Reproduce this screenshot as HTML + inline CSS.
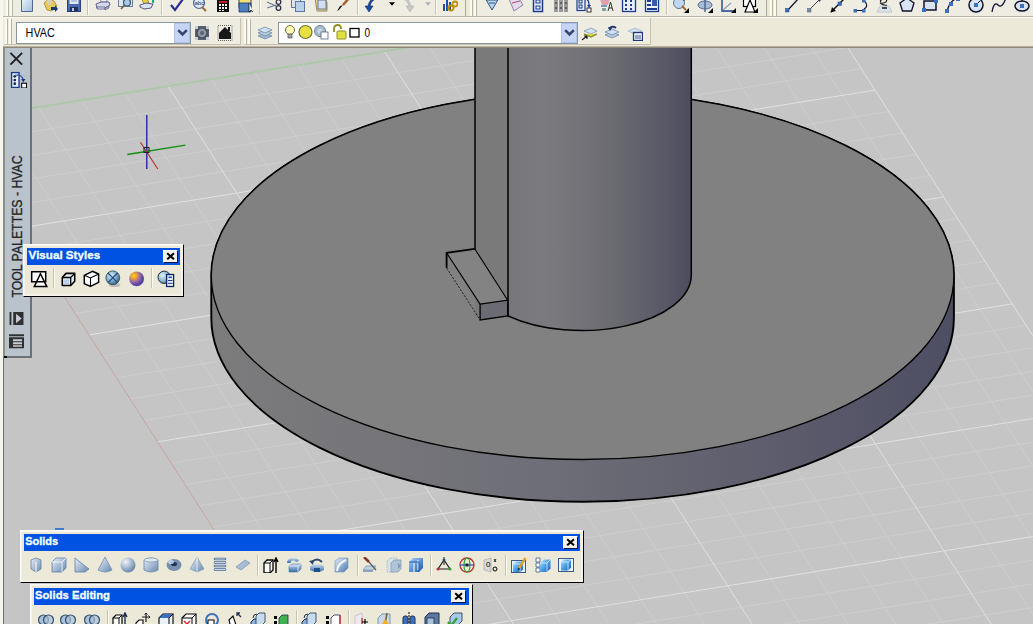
<!DOCTYPE html><html><head><meta charset="utf-8"><style>
*{margin:0;padding:0;box-sizing:border-box}
html,body{width:1033px;height:624px;overflow:hidden;background:#ece9d8;font-family:"Liberation Sans",sans-serif}
.abs{position:absolute}
</style></head><body>
<svg class="abs" style="left:0;top:0" width="1033" height="624" viewBox="0 0 1033 624"><defs><clipPath id="dclip"><rect x="4" y="48" width="1029" height="576"/></clipPath></defs><g clip-path="url(#dclip)"><rect x="0" y="0" width="1033" height="624" fill="#c5c5c5"/><path d="M-34.7 142.5L820.1 4.6M-20.9 163.9L833.8 26.0M-7.2 185.2L847.6 47.4M6.5 206.6L861.3 68.8M34.0 249.4L888.8 111.5M47.7 270.8L902.5 132.9M61.4 292.1L916.2 154.3M75.2 313.5L930.0 175.7M102.6 356.3L957.4 218.4M116.4 377.7L971.1 239.8M130.1 399.0L984.9 261.2M143.8 420.4L998.6 282.6M171.3 463.2L1026.1 325.3M185.0 484.6L1039.8 346.7M198.7 505.9L1053.5 368.1M212.5 527.3L1067.2 389.5M239.9 570.1L1094.7 432.2M253.7 591.5L1108.4 453.6M267.4 612.8L1122.2 475.0M281.1 634.2L1135.9 496.4M308.6 677.0L1163.4 539.1M322.3 698.4L1177.1 560.5M336.0 719.7L1190.8 581.9M349.8 741.1L1204.5 603.3M377.2 783.9L1232.0 646.0M391.0 805.3L1245.7 667.4M404.7 826.6L1259.5 688.8M418.4 848.0L1273.2 710.2M445.9 890.8L1300.7 752.9M459.6 912.2L1314.4 774.3M473.3 933.5L1328.1 795.7M487.1 954.9L1341.8 817.1M514.5 997.7L1369.3 859.8M528.3 1019.1L1383.0 881.2M542.0 1040.4L1396.8 902.6M555.7 1061.8L1410.5 924.0M-5.1 114.1L612.7 1076.2M38.2 107.1L656.0 1069.2M81.4 100.2L699.3 1062.3M124.7 93.2L742.6 1055.3M211.3 79.2L829.1 1041.3M254.6 72.2L872.4 1034.3M297.8 65.3L915.7 1027.4M341.1 58.3L959.0 1020.4M427.7 44.3L1045.5 1006.4M471.0 37.3L1088.8 999.4M514.2 30.4L1132.1 992.5M557.5 23.4L1175.4 985.5M644.1 9.4L1261.9 971.5M687.4 2.4L1305.2 964.5M730.6 -4.5L1348.5 957.6M773.9 -11.5L1391.8 950.6" stroke="#cecece" stroke-width="1" fill="none"/><path d="M20.3 228.0L875.0 90.1M88.9 334.9L943.7 197.0M157.6 441.8L1012.3 303.9M226.2 548.7L1081.0 410.8M294.9 655.6L1149.6 517.7M363.5 762.5L1218.3 624.6M432.2 869.4L1286.9 731.5M500.8 976.3L1355.6 838.4M168.0 86.2L785.9 1048.3M384.4 51.3L1002.2 1013.4M600.8 16.4L1218.7 978.5M806.4 -16.8L1424.2 945.3" stroke="#e0e0e0" stroke-width="1" fill="none"/><path d="M-48.4 121.1L806.4 -16.8" stroke="#aec9aa" stroke-width="2" fill="none"/><path d="M-48.4 121.1L569.5 1083.2" stroke="#c8a4a4" stroke-width="1" fill="none"/><defs>
<linearGradient id="dside" x1="0" x2="1" y1="0" y2="0">
<stop offset="0" stop-color="#7c7c7d"/><stop offset="0.45" stop-color="#6e6e77"/><stop offset="0.8" stop-color="#5a5a6b"/><stop offset="1" stop-color="#4e4e63"/></linearGradient>
<linearGradient id="cyl" gradientUnits="userSpaceOnUse" x1="508" x2="691" y1="0" y2="0">
<stop offset="0" stop-color="#77777b"/><stop offset="0.18" stop-color="#7b7b7f"/><stop offset="0.4" stop-color="#737379"/><stop offset="0.62" stop-color="#68686f"/><stop offset="0.83" stop-color="#5a5a68"/><stop offset="1" stop-color="#4c4c5e"/></linearGradient>
</defs><path d="M211.3 275.5A371.3 184 0 0 1 953.9000000000001 275.5L953.9000000000001 317.8A371.3 184 0 0 1 211.3 317.8Z" fill="url(#dside)" stroke="#000" stroke-width="1.9"/><ellipse cx="582.6" cy="275.5" rx="371.3" ry="184" fill="#818181" stroke="#000" stroke-width="1.3"/><path d="M475 40L691.3 40L691.3 275A109.3 55.5 0 0 1 508 315.9L508 317L475 317Z" fill="url(#cyl)"/><rect x="475" y="40" width="33" height="277" fill="#7a7a7a"/><path d="M691.3 40L691.3 275A109.3 55.5 0 0 1 508 315.9" fill="none" stroke="#000" stroke-width="1.5"/><path d="M475 40L475 249M508 40L508 317" fill="none" stroke="#000" stroke-width="1.5"/><path d="M446.6 252.9L474.8 248.9L507.7 300.2L480.1 304.1Z" fill="#838383"/><path d="M480.1 304.1L507.7 300.2L507.7 315.9L480.1 319.9Z" fill="#6b6b73" stroke="#000" stroke-width="1.3"/><path d="M446.6 252.9L480.1 304.1M474.8 248.9L507.7 300.2" stroke="#000" stroke-width="1.1" fill="none"/><path d="M474.8 248.9L446.6 252.9L446.6 268" stroke="#000" stroke-width="1.8" fill="none"/><path d="M446.6 268L480.1 319.9" stroke="#1a1a1a" stroke-width="0.9" stroke-dasharray="2.2 1.4"/><path d="M146.8 115L146.8 169" stroke="#1a1aa0" stroke-width="1.3"/><path d="M127.3 154.5L185.4 145.2" stroke="#109010" stroke-width="1.3"/><path d="M140.4 142.3L157.8 169" stroke="#b03020" stroke-width="1.1"/><rect x="144" y="147.5" width="5" height="5" fill="none" stroke="#202020" stroke-width="1"/></g></svg>
<div class="abs" style="left:0;top:48px;width:4px;height:576px;background:#f6f5ee"></div>
<div class="abs" style="left:3px;top:48px;width:1px;height:576px;background:#6e6e6a"></div>
<div class="abs" style="left:0px;top:0px;width:1033px;height:48px;background:#ece9d8"></div>
<div class="abs" style="left:0px;top:16px;width:1033px;height:1px;background:#b9b5a4"></div>
<div class="abs" style="left:0px;top:17px;width:1033px;height:1px;background:#faf9f2"></div>
<div class="abs" style="left:0px;top:45px;width:1033px;height:1px;background:#ebe8d8"></div>
<div class="abs" style="left:0px;top:46px;width:1033px;height:1px;background:#bab2a2"></div>
<div class="abs" style="left:0px;top:47px;width:1033px;height:1px;background:#8e8678"></div>
<div class="abs" style="left:0px;top:0px;width:466px;height:16px;background:#efede2;border-right:1px solid #aaa694"></div>
<div class="abs" style="left:0px;top:0px;width:3px;height:48px;background:#f7f6ef"></div>
<div class="abs" style="left:6px;top:0px;width:3px;height:16px;background:#fbfaf3;border-right:1px solid #b8b4a2"></div>
<div class="abs" style="left:10px;top:0px;width:3px;height:16px;background:#fbfaf3;border-right:1px solid #b8b4a2"></div>
<div class="abs" style="left:470px;top:0px;width:3px;height:16px;background:#fbfaf3;border-right:1px solid #b8b4a2"></div>
<div class="abs" style="left:474px;top:0px;width:3px;height:16px;background:#fbfaf3;border-right:1px solid #b8b4a2"></div>
<div class="abs" style="left:478px;top:0px;width:289px;height:16px;background:#efede2;border-right:1px solid #aaa694"></div>
<div class="abs" style="left:770px;top:0px;width:3px;height:16px;background:#fbfaf3;border-right:1px solid #b8b4a2"></div>
<div class="abs" style="left:774px;top:0px;width:3px;height:16px;background:#fbfaf3;border-right:1px solid #b8b4a2"></div>
<div class="abs" style="left:778px;top:0px;width:255px;height:16px;background:#efede2"></div>
<svg class="abs" style="left:19px;top:-3px" width="16" height="16" viewBox="0 0 16 16"><defs><linearGradient id="gnd" x1="0" y1="0" x2="1" y2="1"><stop offset="0" stop-color="#f4f8fc"/><stop offset="1" stop-color="#9ebcdc"/></linearGradient></defs><path d="M2.5 0.5H11L13.5 3V14.5H2.5Z" fill="url(#gnd)" stroke="#4a6898"/></svg>
<svg class="abs" style="left:43px;top:-3px" width="16" height="16" viewBox="0 0 16 16"><path d="M1 6L5 2L11 4L14 9L9 14L4 13Z" fill="#e8c850" stroke="#a08830" stroke-width="0.8"/><path d="M3 4L7 1L10 5L6 9Z" fill="#d8d0b0"/><path d="M8 10L12 10L12 8L15 12L12 15L12 13L8 13Z" fill="#1a3a80"/></svg>
<svg class="abs" style="left:66px;top:-3px" width="16" height="16" viewBox="0 0 16 16"><rect x="1.5" y="0" width="13" height="14.5" fill="#4868b0" stroke="#2a4080"/><rect x="3.5" y="0" width="9" height="7" fill="#e0e8f4"/><path d="M5 2H11M5 4H11" stroke="#8aa0c8"/><rect x="4" y="10" width="8" height="4.5" fill="#20305a"/><rect x="6" y="11" width="2" height="3" fill="#c0c8e0"/></svg>
<svg class="abs" style="left:95px;top:-3px" width="16" height="16" viewBox="0 0 16 16"><path d="M5 0H11L12 5H6Z" fill="#f4f4fa" stroke="#8080a8" stroke-width="0.9"/><path d="M1 7L6 5H14L15 8L10 11H2Z" fill="#d8d8ec" stroke="#505080" stroke-width="0.9"/><path d="M2 10H10V12H2Z" fill="#e8e8f4" stroke="#505080" stroke-width="0.8"/><path d="M10 11L14 9V11L10 13Z" fill="#b0b0d0" stroke="#505080" stroke-width="0.6"/></svg>
<svg class="abs" style="left:117px;top:-3px" width="16" height="16" viewBox="0 0 16 16"><rect x="1.5" y="-2" width="14" height="11.5" fill="#dce8f0" stroke="#6a8098"/><circle cx="10" cy="5.5" r="3.5" fill="#a8c8e0" stroke="#3a5a78" stroke-width="1.2"/><path d="M7.5 8L4 12" stroke="#7a5a40" stroke-width="1.6"/></svg>
<svg class="abs" style="left:139px;top:-3px" width="16" height="16" viewBox="0 0 16 16"><path d="M2 0L7 -1L10 6L5 7Z" fill="#e8d040" stroke="#908020" stroke-width="0.8"/><path d="M1 8L7 6L14 7L12 11L5 12L1 10Z" fill="#dce4f4" stroke="#404880" stroke-width="0.9"/><path d="M10 -1Q15 1 14 6" stroke="#20a080" stroke-width="2" fill="none"/></svg>
<svg class="abs" style="left:169px;top:-3px" width="16" height="16" viewBox="0 0 16 16"><text x="1" y="3" font-size="6" font-family="Liberation Sans" font-weight="bold" fill="#404040">ABC</text><path d="M2 8L6 13L14 2" stroke="#303090" stroke-width="2.2" fill="none"/></svg>
<svg class="abs" style="left:192px;top:-3px" width="16" height="16" viewBox="0 0 16 16"><circle cx="7" cy="6" r="5.5" fill="#d8e8f8" stroke="#506890" stroke-width="1.2"/><text x="2.5" y="8" font-size="6" font-family="Liberation Sans" fill="#203060">abc</text><path d="M10 10L14 14" stroke="#a06830" stroke-width="2"/></svg>
<svg class="abs" style="left:215px;top:-3px" width="16" height="16" viewBox="0 0 16 16"><rect x="2" y="0" width="12" height="15" fill="#101010"/><path d="M4 7h2v2h-2zM7 7h2v2h-2zM10 7h2v2h-2zM4 10h2v2h-2zM7 10h2v2h-2zM10 10h2v2h-2zM4 13h2v1h-2zM7 13h2v1h-2z" fill="#f0f0f0"/><path d="M4 4h8v2h-8z" fill="#c02020"/></svg>
<svg class="abs" style="left:238px;top:-3px" width="16" height="16" viewBox="0 0 16 16"><rect x="1" y="0" width="12" height="10" fill="#f0e070" stroke="#404040" stroke-width="1"/><path d="M1 6H13V15H1Z" fill="#4a80c0" stroke="#203870" stroke-width="0.8"/><path d="M11 6L11 15L13 13L15 15" fill="#fff" stroke="#000" stroke-width="0.7"/></svg>
<svg class="abs" style="left:266px;top:-3px" width="16" height="16" viewBox="0 0 16 16"><path d="M1 5L10 9M1 11L10 8" stroke="#6a7a98" stroke-width="1.2"/><circle cx="12.5" cy="5" r="2.3" fill="none" stroke="#303050" stroke-width="1.3"/><circle cx="12.5" cy="11" r="2.3" fill="none" stroke="#303050" stroke-width="1.3"/></svg>
<svg class="abs" style="left:290px;top:-3px" width="16" height="16" viewBox="0 0 16 16"><rect x="1.5" y="1.5" width="9" height="9" fill="#d8e4f0" stroke="#5878a8"/><rect x="5.5" y="4.5" width="9" height="10" fill="#b8d0e8" stroke="#5878a8"/></svg>
<svg class="abs" style="left:313px;top:-3px" width="16" height="16" viewBox="0 0 16 16"><path d="M2 1H12L14 6V14H4Z" fill="#e8d890" stroke="#807040" stroke-width="0.8"/><rect x="5" y="3" width="8" height="9" fill="#d0e0f0" stroke="#506080" stroke-width="0.8"/></svg>
<svg class="abs" style="left:336px;top:-3px" width="16" height="16" viewBox="0 0 16 16"><path d="M14 0L7 8" stroke="#a06030" stroke-width="2.5"/><path d="M7 8L3 13L1 14L4 9Z" fill="#202020"/></svg>
<svg class="abs" style="left:363px;top:-3px" width="16" height="16" viewBox="0 0 16 16"><path d="M13 0C9 1 6 4 5 9L2 9L6 15L10 9L7 9C8 5 10 3 13 2Z" fill="#1a4aa0" stroke="#102a60" stroke-width="0.6"/></svg>
<svg class="abs" style="left:400px;top:-3px" width="16" height="16" viewBox="0 0 16 16"><path d="M3 0C7 1 10 4 11 9L14 9L10 15L6 9L9 9C8 5 6 3 3 2Z" fill="#c8c8c8" stroke="#b0b0b0" stroke-width="0.6"/></svg>
<svg class="abs" style="left:442px;top:-3px" width="16" height="16" viewBox="0 0 16 16"><path d="M1 7h2v7h-2zM4 3h2v11h-2zM7 5h2v9h-2z" fill="#2050a0"/><path d="M4 0h2v3h-2z" fill="#30a030"/><circle cx="9" cy="11" r="2.5" fill="none" stroke="#c09010" stroke-width="1.8"/><circle cx="13" cy="7" r="2.5" fill="none" stroke="#c09010" stroke-width="1.8"/></svg>
<svg class="abs" style="left:484px;top:-3px" width="16" height="16" viewBox="0 0 16 16"><path d="M1 1L8 13L15 1Z" fill="#b8d8f0" stroke="#305080" stroke-width="1"/><path d="M3 3H13M5 6H11" stroke="#305080" stroke-width="1"/></svg>
<svg class="abs" style="left:508px;top:-3px" width="16" height="16" viewBox="0 0 16 16"><path d="M1 2L10 0L15 8L6 14Z" fill="#e8d8e8" stroke="#7070a0" stroke-width="0.8"/><path d="M4 6L12 4" stroke="#a05080"/></svg>
<svg class="abs" style="left:531px;top:-3px" width="16" height="16" viewBox="0 0 16 16"><rect x="2.5" y="0.5" width="9" height="14" fill="#e8eef8" stroke="#1a3a90" stroke-width="1.5"/><rect x="5" y="3" width="4" height="3" fill="none" stroke="#1a3a90"/><rect x="5" y="9" width="4" height="3" fill="none" stroke="#1a3a90"/></svg>
<svg class="abs" style="left:553px;top:-3px" width="16" height="16" viewBox="0 0 16 16"><path d="M1 1h4v14h-4zM6 1h4v14h-4zM11 1h4v14h-4z" fill="#9a9a9a"/><path d="M2 5h2v2h-2zM7 5h2v2h-2zM12 5h2v2h-2zM2 10h2v2h-2zM7 10h2v2h-2zM12 10h2v2h-2z" fill="#606060"/></svg>
<svg class="abs" style="left:576px;top:-3px" width="16" height="16" viewBox="0 0 16 16"><rect x="1" y="0.5" width="8" height="13" fill="#e8eef8" stroke="#1a3a90" stroke-width="1.2"/><rect x="3" y="3" width="3" height="3" fill="none" stroke="#1a3a90"/><rect x="3" y="8" width="3" height="3" fill="none" stroke="#1a3a90"/><path d="M9 2Q13 2 13 8" stroke="#1a3a90" fill="none" stroke-width="1.3"/><path d="M11 8H15L13 11Z" fill="#1a3a90"/><rect x="11" y="11" width="4" height="4" fill="#fff" stroke="#000" stroke-width="0.8"/></svg>
<svg class="abs" style="left:598px;top:-3px" width="16" height="16" viewBox="0 0 16 16"><path d="M2 2L12 2L10 8L4 8Z" fill="#e0a0b0"/><path d="M3 8h6v2h-6z" fill="#70a0c0"/><path d="M4 11h4v3h-4z" fill="#80a0a0"/><path d="M10 14L12.5 5L15 14M11 11H14" stroke="#303030" stroke-width="1" fill="none"/></svg>
<svg class="abs" style="left:621px;top:-3px" width="16" height="16" viewBox="0 0 16 16"><rect x="1.5" y="0.5" width="13" height="14" fill="#e8eef8" stroke="#1a3a90" stroke-width="1.3"/><path d="M4 3h2v2h-2zM9 3h2v2h-2zM4 7h2v2h-2zM9 7h2v2h-2zM4 11h2v2h-2zM9 11h2v2h-2z" fill="#1a3a90"/></svg>
<svg class="abs" style="left:644px;top:-3px" width="16" height="16" viewBox="0 0 16 16"><rect x="1.5" y="0.5" width="13" height="14" fill="#f0f4fa" stroke="#1a3a90" stroke-width="1.3"/><path d="M3 3h4v2h-4zM3 7h4v2h-4zM3 11h10v2h-10z" fill="#1a3a90"/><path d="M8 2h5v7h-5z" fill="#3a5ab0"/></svg>
<svg class="abs" style="left:673px;top:-3px" width="16" height="16" viewBox="0 0 16 16"><circle cx="6" cy="6" r="5.5" fill="#c0d8ec" stroke="#5a7a9a"/><path d="M9 9L13 13" stroke="#a06830" stroke-width="2"/><path d="M11 0v4M10 0h2" stroke="#202020"/><path d="M16 11V16H11Z" fill="#000"/></svg>
<svg class="abs" style="left:697px;top:-3px" width="16" height="16" viewBox="0 0 16 16"><ellipse cx="8" cy="8" rx="7" ry="4" fill="#a8bcd4" stroke="#506890"/><path d="M8 0V15" stroke="#506890" stroke-width="1.5"/><path d="M16 11V16H11Z" fill="#000"/></svg>
<svg class="abs" style="left:720px;top:-3px" width="16" height="16" viewBox="0 0 16 16"><path d="M2 1V14H14" stroke="#4a6aa0" stroke-width="1.8" fill="none"/><path d="M3 13L11 6" stroke="#8aa0c0" stroke-width="1.2"/><path d="M16 11V16H11Z" fill="#000"/></svg>
<svg class="abs" style="left:742px;top:-3px" width="16" height="16" viewBox="0 0 16 16"><rect x="1.5" y="0.5" width="12" height="9" fill="#fff" stroke="#000" stroke-width="1.2"/><path d="M3 15L8 3L13 15Z" fill="#fff" stroke="#000" stroke-width="1.2"/><path d="M16 11V16H11Z" fill="#000"/></svg>
<svg class="abs" style="left:785px;top:-3px" width="16" height="16" viewBox="0 0 16 16"><path d="M2.5 13.5L14 1" stroke="#101030" stroke-width="1.3"/><rect x="0.5" y="11.5" width="3.5" height="3.5" fill="#3a70c0" stroke="#204080" stroke-width="0.5"/></svg>
<svg class="abs" style="left:807px;top:-3px" width="16" height="16" viewBox="0 0 16 16"><path d="M2 13L14 1" stroke="#303040" stroke-width="0.9"/><path d="M14.5 0.5L10 2L13 5Z" fill="#303040"/><rect x="0.5" y="11.5" width="3.5" height="3.5" fill="#7a8aa0" stroke="#506070" stroke-width="0.5"/></svg>
<svg class="abs" style="left:830px;top:-3px" width="16" height="16" viewBox="0 0 16 16"><path d="M1 15L15 1" stroke="#101010" stroke-width="1.4"/><path d="M0.5 15.5L2 10L6 14Z" fill="#101010"/><rect x="8" y="5" width="3.5" height="3.5" fill="#3a70c0" stroke="#204080" stroke-width="0.5"/></svg>
<svg class="abs" style="left:853px;top:-3px" width="16" height="16" viewBox="0 0 16 16"><path d="M2 13.5H9.5M11 12Q15 10 13 6Q12 4 10 4" stroke="#101030" stroke-width="1.2" fill="none"/><rect x="0.5" y="12" width="3.5" height="3.5" fill="#3a70c0"/><rect x="9" y="12" width="3.5" height="3.5" fill="#3a70c0"/><rect x="9" y="2" width="3.5" height="3.5" fill="#3a70c0"/></svg>
<svg class="abs" style="left:876px;top:-3px" width="16" height="16" viewBox="0 0 16 16"><path d="M1 15L4 9H13L16 15Z" fill="#dce4ec" stroke="#b8c0c8" stroke-width="0.8"/><path d="M5 5Q3 3 8 2Q12 2 10 5Q6 7 4 6Q8 9 11 8" fill="none" stroke="#202020" stroke-width="1.2"/><path d="M6 10h5v2h-5z" fill="#404858"/></svg>
<svg class="abs" style="left:899px;top:-3px" width="16" height="16" viewBox="0 0 16 16"><path d="M8 1L15 6L12.5 14H3.5L1 6Z" fill="#d8e4f0" stroke="#101030" stroke-width="1.3"/></svg>
<svg class="abs" style="left:922px;top:-3px" width="16" height="16" viewBox="0 0 16 16"><rect x="2" y="4" width="12" height="9" fill="#d8e4f0" stroke="#101030" stroke-width="1.5"/><rect x="0" y="11" width="4" height="4" fill="#3a70c0"/><rect x="12" y="2" width="4" height="4" fill="#3a70c0"/></svg>
<svg class="abs" style="left:944px;top:-3px" width="16" height="16" viewBox="0 0 16 16"><path d="M3 14Q6 3 14 1" stroke="#101030" stroke-width="1.3" fill="none"/><rect x="1" y="12" width="4" height="4" fill="#3a70c0"/><rect x="5" y="5" width="4" height="4" fill="#3a70c0"/><rect x="12" y="0" width="4" height="4" fill="#3a70c0"/></svg>
<svg class="abs" style="left:968px;top:-3px" width="16" height="16" viewBox="0 0 16 16"><circle cx="8" cy="8" r="7" fill="#d8e4f0" stroke="#101030" stroke-width="1.5"/><path d="M8 8L12 4" stroke="#101030"/><rect x="6" y="6" width="4" height="4" fill="#3a70c0"/></svg>
<svg class="abs" style="left:991px;top:-3px" width="16" height="16" viewBox="0 0 16 16"><path d="M1 15Q3 4 7 8T15 1" stroke="#101030" stroke-width="1.3" fill="none"/></svg>
<svg class="abs" style="left:1014px;top:-3px" width="16" height="16" viewBox="0 0 16 16"><ellipse cx="8" cy="9" rx="7" ry="5" fill="#d8e4f0" stroke="#101030" stroke-width="1.5"/><rect x="6" y="7" width="4" height="4" fill="#3a70c0"/><path d="M8 1V5" stroke="#101030"/></svg>
<svg class="abs" style="left:389px;top:2px" width="6" height="4" viewBox="0 0 5 3"><path d="M0 0H5L2.5 3Z" fill="#000"/></svg>
<svg class="abs" style="left:425px;top:2px" width="6" height="4" viewBox="0 0 5 3"><path d="M0 0H5L2.5 3Z" fill="#b0b0b0"/></svg>
<div class="abs" style="left:87px;top:0px;width:1px;height:15px;background:#c8c4b0"></div>
<div class="abs" style="left:88px;top:0px;width:1px;height:15px;background:#fbfaf4"></div>
<div class="abs" style="left:161px;top:0px;width:1px;height:15px;background:#c8c4b0"></div>
<div class="abs" style="left:162px;top:0px;width:1px;height:15px;background:#fbfaf4"></div>
<div class="abs" style="left:259px;top:0px;width:1px;height:15px;background:#c8c4b0"></div>
<div class="abs" style="left:260px;top:0px;width:1px;height:15px;background:#fbfaf4"></div>
<div class="abs" style="left:357px;top:0px;width:1px;height:15px;background:#c8c4b0"></div>
<div class="abs" style="left:358px;top:0px;width:1px;height:15px;background:#fbfaf4"></div>
<div class="abs" style="left:435px;top:0px;width:1px;height:15px;background:#c8c4b0"></div>
<div class="abs" style="left:436px;top:0px;width:1px;height:15px;background:#fbfaf4"></div>
<div class="abs" style="left:666px;top:0px;width:1px;height:15px;background:#c8c4b0"></div>
<div class="abs" style="left:667px;top:0px;width:1px;height:15px;background:#fbfaf4"></div>
<div class="abs" style="left:4px;top:18px;width:237px;height:27px;background:#efede2;border-right:1px solid #c5c1ae;border-bottom:1px solid #c5c1ae"></div>
<div class="abs" style="left:5px;top:19px;width:3px;height:25px;background:#fbfaf3;border-right:1px solid #b8b4a2"></div>
<div class="abs" style="left:9px;top:19px;width:3px;height:25px;background:#fbfaf3;border-right:1px solid #b8b4a2"></div>
<div class="abs" style="left:244px;top:18px;width:407px;height:27px;background:#efede2;border-right:1px solid #c5c1ae;border-bottom:1px solid #c5c1ae"></div>
<div class="abs" style="left:244px;top:19px;width:3px;height:25px;background:#fbfaf3;border-right:1px solid #b8b4a2"></div>
<div class="abs" style="left:248px;top:19px;width:3px;height:25px;background:#fbfaf3;border-right:1px solid #b8b4a2"></div>
<div class="abs" style="left:16px;top:22px;width:175px;height:22px;background:#fff;border:1px solid #8a96a0"></div>
<svg class="abs" style="left:0;top:0;overflow:visible" width="1" height="1"><text x="25.6" y="36.9" font-family="Liberation Sans" font-size="12" font-weight="normal" fill="#000" textLength="29.2" lengthAdjust="spacingAndGlyphs" >HVAC</text></svg>
<div class="abs" style="left:174px;top:23px;width:16px;height:20px;background:#c6d4f6;border:1px solid #b0c2ee"></div>
<svg class="abs" style="left:176.5px;top:28.5px" width="11" height="8" viewBox="0 0 11 8"><path d="M1.2 1.2L5.5 5.5L9.8 1.2" stroke="#34466e" stroke-width="2.6" fill="none"/></svg>
<svg class="abs" style="left:194px;top:25px" width="16" height="16" viewBox="0 0 16 16"><rect x="1" y="1" width="14" height="14" fill="#5a6270"/><circle cx="8" cy="8" r="5" fill="#9098a8" stroke="#404850" stroke-width="1.2"/><circle cx="8" cy="8" r="2" fill="#5a6270"/><path d="M1 1h3v3h-3zM12 1h3v3h-3zM1 12h3v3h-3zM12 12h3v3h-3z" fill="#c8ccd4"/></svg>
<svg class="abs" style="left:217px;top:25px" width="16" height="16" viewBox="0 0 16 16"><path d="M1 0.5h14v15h-14z" fill="none" stroke="#606060" stroke-dasharray="1 1"/><path d="M2 8L8 2L14 8V14H2Z" fill="#181818"/><path d="M11 2h2v4h-2z" fill="#181818"/></svg>
<svg class="abs" style="left:257px;top:25px" width="16" height="16" viewBox="0 0 16 16"><path d="M1 11L8 14L15 11L8 8Z" fill="#a0b8d0" stroke="#6080a0" stroke-width="0.7"/><path d="M1 8L8 11L15 8L8 5Z" fill="#b8cce0" stroke="#6080a0" stroke-width="0.7"/><path d="M1 5L8 8L15 5L8 2Z" fill="#d0e0f0" stroke="#6080a0" stroke-width="0.7"/></svg>
<div class="abs" style="left:278px;top:22px;width:300px;height:22px;background:#fff;border:1px solid #8a96a0"></div>
<svg class="abs" style="left:284px;top:24px" width="12" height="16" viewBox="0 0 12 16"><circle cx="6" cy="6" r="4.5" fill="#fff8b0" stroke="#707050" stroke-width="1"/><rect x="4" y="10" width="4" height="4" fill="#a0a0a0" stroke="#505050" stroke-width="0.7"/></svg>
<svg class="abs" style="left:298px;top:24px" width="16" height="16" viewBox="0 0 16 16"><circle cx="7.5" cy="8" r="6.5" fill="#e8e040" stroke="#707830" stroke-width="1.2"/></svg>
<svg class="abs" style="left:314px;top:24px" width="16" height="16" viewBox="0 0 16 16"><circle cx="6" cy="7" r="5.5" fill="#a8bcd0" stroke="#708098"/><circle cx="6" cy="7" r="2.5" fill="#c8d8e8"/><rect x="7" y="8" width="7" height="7" fill="#fff" stroke="#506080" stroke-width="0.8"/></svg>
<svg class="abs" style="left:332px;top:24px" width="16" height="16" viewBox="0 0 16 16"><path d="M2 8V5Q2 1 6 1Q9 1 9 5" stroke="#909020" stroke-width="1.8" fill="none"/><rect x="5" y="7" width="9" height="8" rx="1" fill="#e0e040" stroke="#909020"/></svg>
<svg class="abs" style="left:347.5px;top:24px" width="13" height="16" viewBox="0 0 13 16"><rect x="2" y="4.5" width="9" height="8.5" fill="#fff" stroke="#000" stroke-width="1.3"/></svg>
<svg class="abs" style="left:0;top:0;overflow:visible" width="1" height="1"><text x="364.6" y="36.9" font-family="Liberation Sans" font-size="12" font-weight="normal" fill="#000" textLength="5.6" lengthAdjust="spacingAndGlyphs" >0</text></svg>
<div class="abs" style="left:561px;top:23px;width:16px;height:20px;background:#c6d4f6;border:1px solid #b0c2ee"></div>
<svg class="abs" style="left:563.5px;top:28.5px" width="11" height="8" viewBox="0 0 11 8"><path d="M1.2 1.2L5.5 5.5L9.8 1.2" stroke="#34466e" stroke-width="2.6" fill="none"/></svg>
<svg class="abs" style="left:581px;top:25px" width="16" height="16" viewBox="0 0 16 16"><path d="M3 6L10 9L16 6L10 3Z" fill="#d0e0f0" stroke="#6080a0" stroke-width="0.6"/><path d="M3 9L10 12L16 9" fill="#e0e040" stroke="#909030" stroke-width="1.5"/><path d="M1 15L6 11M6 11H3M6 11V14" stroke="#202020" stroke-width="1.2"/></svg>
<svg class="abs" style="left:604px;top:25px" width="16" height="16" viewBox="0 0 16 16"><path d="M1 10L8 13L15 10L8 7Z" fill="#b8cce0" stroke="#6080a0" stroke-width="0.7"/><path d="M1 7L8 10L15 7L8 4Z" fill="#d0e0f0" stroke="#6080a0" stroke-width="0.7"/><path d="M5 4Q8 0 12 3" stroke="#203870" stroke-width="2" fill="none"/><path d="M4 2L6 6L8 3Z" fill="#203870"/></svg>
<svg class="abs" style="left:627px;top:25px" width="16" height="16" viewBox="0 0 16 16"><path d="M1 6L8 9L15 6L8 3Z" fill="#d0e0f0" stroke="#90a8c0" stroke-width="0.6"/><rect x="6.5" y="7.5" width="9" height="8" fill="#e8f0f8" stroke="#203870" stroke-width="1.3"/><path d="M8 11H14M8 13H14" stroke="#203870" stroke-width="0.8"/></svg>
<div class="abs" style="left:3px;top:48px;width:29px;height:310px;background:#bac2cc;border-left:2px solid #8c8c88;border-right:2px solid #6c7078;border-bottom:2px solid #6c7078"></div>
<svg class="abs" style="left:9px;top:51.5px" width="14.5" height="13.5" viewBox="0 0 15 15"><path d="M1 1L14 14M14 1L1 14" stroke="#1c2024" stroke-width="2.1"/></svg>
<svg class="abs" style="left:9.5px;top:70.5px" width="17" height="17" viewBox="0 0 16 16"><rect x="1.5" y="1.5" width="7" height="14" fill="#e8f0fa" stroke="#1a3a90" stroke-width="1.3"/><circle cx="4.5" cy="5" r="1.3" fill="#202848"/><circle cx="4.5" cy="8.5" r="1.3" fill="#202848"/><circle cx="4.5" cy="12" r="1.3" fill="#202848"/><path d="M5 4Q11 3 12.5 8" stroke="#3050a0" stroke-width="1.1" fill="none"/><path d="M10.5 7.5L14.5 7.5L12.5 10.5Z" fill="#1a3070"/><rect x="11" y="11.5" width="4.5" height="4.5" fill="#fff" stroke="#000" stroke-width="1"/></svg>
<svg class="abs" style="left:0;top:0;overflow:visible" width="1" height="1"><text transform="translate(22.1 297.6) rotate(-90)" font-family="Liberation Sans" font-size="14" font-weight="normal" fill="#262626" textLength="142.3" lengthAdjust="spacingAndGlyphs" stroke="#262626" stroke-width="0.3">TOOL PALETTES - HVAC</text></svg>
<svg class="abs" style="left:9px;top:312px" width="15" height="13" viewBox="0 0 15 14"><rect x="0" y="0" width="2" height="14" fill="#303030"/><rect x="4" y="0" width="11" height="14" fill="#303030"/><path d="M7 2L13 7L7 12Z" fill="#c8ccd4"/></svg>
<svg class="abs" style="left:9px;top:334px" width="15" height="14.5" viewBox="0 0 15 14"><rect x="0" y="0" width="15" height="2" fill="#303030"/><rect x="0" y="3" width="15" height="11" fill="#303030"/><path d="M4 5h9v2h-9zM4 8h9v2h-9zM4 11h9v1.5h-9z" fill="#c8ccd4"/></svg>
<div class="abs" style="left:4px;top:356px;width:3px;height:2px;background:#000"></div>
<div class="abs" style="left:23px;top:244px;width:161px;height:53px;background:#ece9d8;border-top:1px solid #fdfcf6;border-left:1px solid #fdfcf6;border-right:1px solid #000;border-bottom:1px solid #000;box-shadow:inset -2px -2px 0 #f3f1e8, inset 1px 1px 0 #f6f4ea"></div>
<div class="abs" style="left:27px;top:248px;width:153px;height:17px;background:#0052e2"></div>
<svg class="abs" style="left:0;top:0;overflow:visible" width="1" height="1"><text x="28.6" y="258.8" font-family="Liberation Sans" font-size="11.5" font-weight="bold" fill="#f0fcff" textLength="71.5" lengthAdjust="spacingAndGlyphs" stroke="#f0fcff" stroke-width="0.35">Visual Styles</text></svg>
<div class="abs" style="left:163px;top:250px;width:15px;height:13px;background:#f3f1e9;border-top:1px solid #fff;border-left:1px solid #fff;border-right:1px solid #0a1a50;border-bottom:1px solid #0a1a50"></div>
<svg class="abs" style="left:165.5px;top:251.5px" width="9.2" height="8.5" viewBox="0 0 9.2 8.5"><path d="M1.2 1.2L8 7.3M8 1.2L1.2 7.3" stroke="#000" stroke-width="2"/></svg>
<svg class="abs" style="left:29px;top:270px" width="20" height="18" viewBox="0 0 20 18"><path d="M2.7 1.7H16.7V11.7H2.7Z" fill="#fff"/><path d="M11.4 3.7L5.3 16.6H17.8Z" fill="#fff" stroke="#000" stroke-width="1.5" stroke-linejoin="miter"/><path d="M2.7 1.7H16.7V11.7H2.7Z" fill="none" stroke="#000" stroke-width="1.5"/></svg>
<svg class="abs" style="left:58px;top:268px" width="66" height="22" viewBox="58 268 66 22"><path d="M62.3 277.5L66 273.4H74.7V281.2L70.7 285.5H62.3Z" fill="#e4ecf6" stroke="#000" stroke-width="1.6" stroke-linejoin="round"/><path d="M62.3 277.5H70.7V285.5M70.7 277.5L74.7 273.4" fill="none" stroke="#000" stroke-width="1.3"/><rect x="64" y="279.5" width="5" height="4.5" fill="#bcd0ea"/><path d="M92.4 271.3L98.6 274V282.4L90.5 286.4L84.3 283.7V275.3Z" fill="#fff" stroke="#000" stroke-width="1.5" stroke-linejoin="round"/><path d="M84.3 275.3L90.5 277.9L98.6 274M90.5 277.9V286.4" fill="none" stroke="#000" stroke-width="1.1"/><defs><radialGradient id="vsr2" cx="0.38" cy="0.32" r="0.75"><stop offset="0" stop-color="#d8eefc"/><stop offset="0.5" stop-color="#80b0d8"/><stop offset="1" stop-color="#2a5478"/></radialGradient></defs><ellipse cx="114.5" cy="285" rx="6" ry="2" fill="#a0a098" opacity="0.6"/><circle cx="112.8" cy="277.8" r="6.9" fill="url(#vsr2)" stroke="#30506a" stroke-width="0.9"/><path d="M108 273L117.6 282.6M117.6 273L108 282.6" stroke="#2a4a70" stroke-width="1.2"/></svg>
<svg class="abs" style="left:125px;top:268px" width="56" height="22" viewBox="125 268 56 22"><defs><radialGradient id="vsc2" cx="0.32" cy="0.3" r="0.85"><stop offset="0" stop-color="#ffd820"/><stop offset="0.22" stop-color="#f0a030"/><stop offset="0.45" stop-color="#a070a0"/><stop offset="0.7" stop-color="#6048a8"/><stop offset="1" stop-color="#4838a0"/></radialGradient><radialGradient id="vsm2" cx="0.35" cy="0.35" r="0.75"><stop offset="0" stop-color="#e0f0fa"/><stop offset="0.6" stop-color="#8ab4d4"/><stop offset="1" stop-color="#3a5a78"/></radialGradient></defs><circle cx="136.6" cy="278.8" r="7.4" fill="url(#vsc2)"/><circle cx="164.2" cy="277.3" r="6.2" fill="url(#vsm2)" stroke="#203040" stroke-width="1"/><rect x="166.6" y="274.5" width="7" height="12" fill="#e4eef8" stroke="#10246a" stroke-width="1.3"/><path d="M168.5 277.3H171.8" stroke="#2050c0" stroke-width="1.6"/><path d="M168 280.5H172.5M168 283.3H172.5" stroke="#10246a" stroke-width="0.9"/></svg>
<div class="abs" style="left:53px;top:268px;width:1px;height:20px;background:#c8c4b0"></div>
<div class="abs" style="left:54px;top:268px;width:1px;height:20px;background:#fbfaf4"></div>
<div class="abs" style="left:151px;top:268px;width:1px;height:20px;background:#c8c4b0"></div>
<div class="abs" style="left:152px;top:268px;width:1px;height:20px;background:#fbfaf4"></div>
<div class="abs" style="left:55px;top:528px;width:9px;height:2px;background:#3c7cc8"></div>
<div class="abs" style="left:20px;top:530px;width:564px;height:53px;background:#ece9d8;border-top:1px solid #fdfcf6;border-left:1px solid #fdfcf6;border-right:1px solid #000;border-bottom:1px solid #000;box-shadow:inset -2px -2px 0 #f3f1e8, inset 1px 1px 0 #f6f4ea"></div>
<div class="abs" style="left:24px;top:534px;width:556px;height:17px;background:#0052e2"></div>
<svg class="abs" style="left:0;top:0;overflow:visible" width="1" height="1"><text x="25.2" y="545" font-family="Liberation Sans" font-size="11.5" font-weight="bold" fill="#f0fcff" textLength="33" lengthAdjust="spacingAndGlyphs" stroke="#f0fcff" stroke-width="0.35">Solids</text></svg>
<div class="abs" style="left:563px;top:536px;width:15px;height:13px;background:#f3f1e9;border-top:1px solid #fff;border-left:1px solid #fff;border-right:1px solid #0a1a50;border-bottom:1px solid #0a1a50"></div>
<svg class="abs" style="left:565.5px;top:537.5px" width="9.2" height="8.5" viewBox="0 0 9.2 8.5"><path d="M1.2 1.2L8 7.3M8 1.2L1.2 7.3" stroke="#000" stroke-width="2"/></svg>
<svg class="abs" style="left:28px;top:557px" width="16" height="16" viewBox="0 0 16 16"><defs><linearGradient id="sg1" x1="0" y1="0" x2="1" y2="1"><stop offset="0" stop-color="#e8f0f8"/><stop offset="1" stop-color="#6a88b0"/></linearGradient></defs><path d="M3 3L8 1L13 3V12L8 15L3 12Z" fill="url(#sg1)" stroke="#6080a8" stroke-width="0.8"/><path d="M8 5V15" stroke="#fff"/></svg>
<svg class="abs" style="left:51px;top:557px" width="16" height="16" viewBox="0 0 16 16"><defs><linearGradient id="sg2" x1="0" y1="0" x2="1" y2="1"><stop offset="0" stop-color="#e8f0f8"/><stop offset="1" stop-color="#6a88b0"/></linearGradient></defs><path d="M1 5L5 1H15V11L11 15H1Z" fill="url(#sg2)" stroke="#6080a8" stroke-width="0.8"/><path d="M1 5H11V15M11 5L15 1" stroke="#fff" stroke-width="0.8" fill="none"/></svg>
<svg class="abs" style="left:74px;top:557px" width="16" height="16" viewBox="0 0 16 16"><defs><linearGradient id="sg3" x1="0" y1="0" x2="1" y2="1"><stop offset="0" stop-color="#e8f0f8"/><stop offset="1" stop-color="#6a88b0"/></linearGradient></defs><path d="M1 1L15 12L11 15H1Z" fill="url(#sg3)" stroke="#6080a8" stroke-width="0.8"/></svg>
<svg class="abs" style="left:97px;top:557px" width="16" height="16" viewBox="0 0 16 16"><defs><linearGradient id="sg4" x1="0" y1="0" x2="1" y2="1"><stop offset="0" stop-color="#e8f0f8"/><stop offset="1" stop-color="#6a88b0"/></linearGradient></defs><path d="M8 0L15 13Q8 17 1 13Z" fill="url(#sg4)" stroke="#7090b0" stroke-width="0.8"/></svg>
<svg class="abs" style="left:120px;top:557px" width="16" height="16" viewBox="0 0 16 16"><defs><radialGradient id="sosp" cx="0.35" cy="0.3" r="0.8"><stop offset="0" stop-color="#f0f6fc"/><stop offset="1" stop-color="#5a78a0"/></radialGradient></defs><circle cx="8" cy="8" r="7.5" fill="url(#sosp)"/></svg>
<svg class="abs" style="left:143px;top:557px" width="16" height="16" viewBox="0 0 16 16"><defs><linearGradient id="sg5" x1="0" y1="0" x2="1" y2="1"><stop offset="0" stop-color="#e8f0f8"/><stop offset="1" stop-color="#6a88b0"/></linearGradient></defs><path d="M1 3Q8 -1 15 3V13Q8 17 1 13Z" fill="url(#sg5)" stroke="#6a88a8" stroke-width="0.8"/><ellipse cx="8" cy="3" rx="7" ry="2" fill="#e0e8f0" stroke="#6a88a8" stroke-width="0.6"/></svg>
<svg class="abs" style="left:166px;top:557px" width="16" height="16" viewBox="0 0 16 16"><ellipse cx="8" cy="8" rx="7.5" ry="6" fill="#7890b0"/><ellipse cx="8" cy="7" rx="3" ry="2" fill="#203050"/><ellipse cx="5" cy="5" rx="3" ry="2" fill="#c8d8e8" opacity="0.8"/></svg>
<svg class="abs" style="left:189px;top:557px" width="16" height="16" viewBox="0 0 16 16"><defs><linearGradient id="sg6" x1="0" y1="0" x2="1" y2="1"><stop offset="0" stop-color="#e8f0f8"/><stop offset="1" stop-color="#6a88b0"/></linearGradient></defs><path d="M8 0L15 12L8 15L1 12Z" fill="url(#sg6)" stroke="#7090b0" stroke-width="0.6"/><path d="M8 0V15" stroke="#fff" stroke-width="0.7"/></svg>
<svg class="abs" style="left:212px;top:557px" width="16" height="16" viewBox="0 0 16 16"><path d="M3 2H13M3 5.5H13M3 9H13M3 12.5H13" stroke="#4a6898" stroke-width="2.6" stroke-linecap="round"/><path d="M3 2H13M3 5.5H13M3 9H13M3 12.5H13" stroke="#c8d8e8" stroke-width="1" stroke-linecap="round"/></svg>
<svg class="abs" style="left:235px;top:557px" width="16" height="16" viewBox="0 0 16 16"><path d="M1 10L10 3L15 6L6 13Z" fill="#a8bcd4" stroke="#8098b8" stroke-width="0.8"/></svg>
<svg class="abs" style="left:263px;top:557px" width="16" height="16" viewBox="0 0 16 16"><path d="M1 6L4 3H10V13L7 16H1Z" fill="#fff" stroke="#000" stroke-width="1.3"/><path d="M1 6H7V16M7 6L10 3" stroke="#000" stroke-width="1" fill="none"/><path d="M13 16V2M11 5L13 1L15 5" stroke="#000" stroke-width="1.4" fill="none"/></svg>
<svg class="abs" style="left:286px;top:557px" width="16" height="16" viewBox="0 0 16 16"><defs><linearGradient id="lg1" x1="0" y1="0" x2="0" y2="1"><stop offset="0" stop-color="#c8dcf0"/><stop offset="1" stop-color="#3a6aa8"/></linearGradient></defs><path d="M1 6Q1 1 7 1Q13 1 13 4L10 5Q9 3 7 3.5Q4 4 5 6Z" fill="url(#lg1)"/><path d="M3 9L6 7H15V12L12 15H3Z" fill="url(#lg1)" stroke="#4a78b0" stroke-width="0.6"/><path d="M3 9H12V15M12 9L15 7" stroke="#e0ecf8" stroke-width="0.8" fill="none"/></svg>
<svg class="abs" style="left:309px;top:557px" width="16" height="16" viewBox="0 0 16 16"><defs><linearGradient id="rv1" x1="0" y1="0" x2="0" y2="1"><stop offset="0" stop-color="#d0e0f0"/><stop offset="1" stop-color="#3a6aa8"/></linearGradient></defs><path d="M3 5Q8 0 13 5" stroke="#304870" stroke-width="2" fill="none"/><path d="M0 4L4 8L5 3Z" fill="#304870"/><path d="M1 9Q8 5 15 9V13Q8 17 1 13Z" fill="url(#rv1)"/><path d="M5 11H11V15H5Z" fill="#20508a"/></svg>
<svg class="abs" style="left:333px;top:557px" width="16" height="16" viewBox="0 0 16 16"><defs><linearGradient id="sw1" x1="0" y1="0" x2="1" y2="1"><stop offset="0" stop-color="#e0ecf8"/><stop offset="1" stop-color="#4a78b0"/></linearGradient></defs><path d="M2 4L6 1H15V11L11 15H2Z" fill="url(#sw1)" stroke="#7090b8" stroke-width="0.6"/><path d="M4 14Q5 6 13 3" stroke="#f4f8fc" stroke-width="2" fill="none"/></svg>
<svg class="abs" style="left:362px;top:557px" width="16" height="16" viewBox="0 0 16 16"><path d="M1 13L4 9H14L11 13Z" fill="#c0d0e0" stroke="#7890a8" stroke-width="0.7"/><path d="M1 13H11V15H1Z" fill="#8aa4c0"/><path d="M2 0L7 5" stroke="#903028" stroke-width="2.5"/><path d="M7 5L14 13" stroke="#505870" stroke-width="1.2"/></svg>
<svg class="abs" style="left:386px;top:557px" width="16" height="16" viewBox="0 0 16 16"><path d="M1 4L4 1H11V12L8 15H1Z" fill="#d8e0e8" stroke="#a0b0c0" stroke-width="0.8" stroke-dasharray="1.5 1"/><path d="M5 6L8 3H15V12L12 15H5Z" fill="#b0c4d8" stroke="#8098b0" stroke-width="0.7"/><path d="M12 6V12L15 9" fill="#8098b8"/></svg>
<svg class="abs" style="left:408px;top:557px" width="16" height="16" viewBox="0 0 16 16"><defs><linearGradient id="sc1" x1="0" y1="0" x2="1" y2="1"><stop offset="0" stop-color="#a8d0f8"/><stop offset="1" stop-color="#1a58b0"/></linearGradient></defs><path d="M1 5L5 1H15V11L11 15H1Z" fill="url(#sc1)"/><path d="M6 6V15M10 3V13" stroke="#e8f4fc" stroke-width="1.2"/><path d="M1 5H11V15" stroke="#2050a0" stroke-width="0.8" fill="none"/></svg>
<svg class="abs" style="left:436px;top:557px" width="16" height="16" viewBox="0 0 16 16"><path d="M8 3L2 12H14Z" fill="none" stroke="#202020" stroke-width="1.2"/><circle cx="8" cy="3" r="1.5" fill="#3a70c0"/><circle cx="2" cy="12" r="1.5" fill="#c03030"/><circle cx="14" cy="12" r="1.5" fill="#30a030"/><path d="M8 0V8" stroke="#202020"/></svg>
<svg class="abs" style="left:459px;top:557px" width="16" height="16" viewBox="0 0 16 16"><circle cx="8" cy="8" r="7" fill="none" stroke="#c03030" stroke-width="1.3"/><ellipse cx="8" cy="8" rx="3" ry="7" fill="none" stroke="#30a030" stroke-width="1.2"/><path d="M1 8H15" stroke="#3050c0" stroke-width="1.2"/><rect x="6.5" y="6.5" width="3" height="3" fill="#202020"/></svg>
<svg class="abs" style="left:483px;top:557px" width="16" height="16" viewBox="0 0 16 16"><path d="M1 3L8 1V15L1 13Z" fill="#d8d8d8" stroke="#a0a0a0" stroke-width="0.6"/><text x="3" y="10" font-size="8" font-family="Liberation Sans" fill="#000">0</text><circle cx="12" cy="12" r="2" fill="none" stroke="#000"/><path d="M11 2L13 5M11 5L13 2" stroke="#000" stroke-width="0.8"/></svg>
<svg class="abs" style="left:511px;top:557px" width="16" height="16" viewBox="0 0 16 16"><defs><linearGradient id="bx1" x1="0" y1="0" x2="1" y2="1"><stop offset="0" stop-color="#c0e4fc"/><stop offset="0.5" stop-color="#4aa0e8"/><stop offset="1" stop-color="#1a5ab0"/></linearGradient></defs><rect x="0.5" y="3.5" width="14" height="12" fill="#e8f0f8" stroke="#3a5a8a"/><path d="M2 7L5 4.5H12V12.5L9 15H2Z" fill="url(#bx1)"/><path d="M2 7H9V15M9 7L12 4.5" stroke="#d8ecfc" stroke-width="0.8" fill="none"/><path d="M8 11L14.5 1" stroke="#e0a020" stroke-width="2.4"/><path d="M8 11L7.5 13" stroke="#202020" stroke-width="1.5"/></svg>
<svg class="abs" style="left:535px;top:557px" width="16" height="16" viewBox="0 0 16 16"><defs><linearGradient id="bx2" x1="0" y1="0" x2="1" y2="1"><stop offset="0" stop-color="#c0e4fc"/><stop offset="0.5" stop-color="#4aa0e8"/><stop offset="1" stop-color="#1a5ab0"/></linearGradient></defs><path d="M1 1h4v4h-4zM1 6h4v4h-4zM1 11h4v4h-4z" fill="#fff" stroke="#3a5a8a" stroke-width="0.8"/><path d="M5 6L9 2.5H15.5V11.5L12 15H5Z" fill="url(#bx2)"/><path d="M5 6H12V15M12 6L15.5 2.5" stroke="#d8ecfc" stroke-width="0.8" fill="none"/></svg>
<svg class="abs" style="left:558px;top:557px" width="16" height="16" viewBox="0 0 16 16"><defs><linearGradient id="bx3" x1="0" y1="0" x2="1" y2="1"><stop offset="0" stop-color="#c0e4fc"/><stop offset="0.5" stop-color="#4aa0e8"/><stop offset="1" stop-color="#1a5ab0"/></linearGradient></defs><rect x="0.5" y="1.5" width="15" height="13" fill="#e8f0f8" stroke="#3a5a8a"/><path d="M3 5L6 2.5H13V10.5L10 13.5H3Z" fill="url(#bx3)"/><path d="M3 5H10V13.5M10 5L13 2.5" stroke="#d8ecfc" stroke-width="0.8" fill="none"/></svg>
<div class="abs" style="left:257px;top:555px;width:1px;height:21px;background:#c8c4b0"></div>
<div class="abs" style="left:258px;top:555px;width:1px;height:21px;background:#fbfaf4"></div>
<div class="abs" style="left:357px;top:555px;width:1px;height:21px;background:#c8c4b0"></div>
<div class="abs" style="left:358px;top:555px;width:1px;height:21px;background:#fbfaf4"></div>
<div class="abs" style="left:430px;top:555px;width:1px;height:21px;background:#c8c4b0"></div>
<div class="abs" style="left:431px;top:555px;width:1px;height:21px;background:#fbfaf4"></div>
<div class="abs" style="left:505px;top:555px;width:1px;height:21px;background:#c8c4b0"></div>
<div class="abs" style="left:506px;top:555px;width:1px;height:21px;background:#fbfaf4"></div>
<div class="abs" style="left:30px;top:584px;width:443px;height:60px;background:#ece9d8;border-top:1px solid #fdfcf6;border-left:1px solid #fdfcf6;border-right:1px solid #000;border-bottom:1px solid #000;box-shadow:inset -2px -2px 0 #f3f1e8, inset 1px 1px 0 #f6f4ea"></div>
<div class="abs" style="left:34px;top:588px;width:435px;height:17px;background:#0052e2"></div>
<svg class="abs" style="left:0;top:0;overflow:visible" width="1" height="1"><text x="35" y="599.2" font-family="Liberation Sans" font-size="11.5" font-weight="bold" fill="#f0fcff" textLength="75" lengthAdjust="spacingAndGlyphs" stroke="#f0fcff" stroke-width="0.35">Solids Editing</text></svg>
<div class="abs" style="left:451px;top:590px;width:15px;height:13px;background:#f3f1e9;border-top:1px solid #fff;border-left:1px solid #fff;border-right:1px solid #0a1a50;border-bottom:1px solid #0a1a50"></div>
<svg class="abs" style="left:453.5px;top:591.5px" width="9.2" height="8.5" viewBox="0 0 9.2 8.5"><path d="M1.2 1.2L8 7.3M8 1.2L1.2 7.3" stroke="#000" stroke-width="2"/></svg>
<svg class="abs" style="left:38px;top:612px" width="16" height="16" viewBox="0 0 16 16"><circle cx="5.5" cy="8" r="5" fill="#a8c0d8" stroke="#305070" stroke-width="1.2"/><circle cx="10.5" cy="8" r="5" fill="#a8c0d8" stroke="#305070" stroke-width="1.2" fill-opacity="0.7"/></svg>
<svg class="abs" style="left:60px;top:612px" width="16" height="16" viewBox="0 0 16 16"><circle cx="5.5" cy="8" r="5" fill="#a8c0d8" stroke="#305070" stroke-width="1.2"/><circle cx="10.5" cy="8" r="5" fill="#a8c0d8" stroke="#305070" stroke-width="1.2" fill-opacity="0.7"/></svg>
<svg class="abs" style="left:84px;top:612px" width="16" height="16" viewBox="0 0 16 16"><circle cx="5.5" cy="8" r="5" fill="#a8c0d8" stroke="#305070" stroke-width="1.2"/><circle cx="10.5" cy="8" r="5" fill="#a8c0d8" stroke="#305070" stroke-width="1.2" fill-opacity="0.7"/></svg>
<svg class="abs" style="left:112px;top:612px" width="16" height="16" viewBox="0 0 16 16"><path d="M1 6L4 3H10V16H1Z" fill="#fff" stroke="#000" stroke-width="1.2"/><path d="M1 6H7V16M7 6L10 3" stroke="#000" stroke-width="1" fill="none"/><path d="M13 16V2M11 5L13 1L15 5" stroke="#203050" stroke-width="1.4" fill="none"/></svg>
<svg class="abs" style="left:135px;top:612px" width="16" height="16" viewBox="0 0 16 16"><path d="M1 11L4 8H8V16H1Z" fill="#fff" stroke="#000" stroke-width="1.1"/><path d="M11 1V10M7 5H15" stroke="#202020" stroke-width="1.2"/><path d="M9.5 2.5L11 1L12.5 2.5M13.5 3.5L15 5L13.5 6.5" stroke="#202020" fill="none"/></svg>
<svg class="abs" style="left:158px;top:612px" width="16" height="16" viewBox="0 0 16 16"><path d="M1 6L5 2H15V12L11 16H1Z" fill="#e8f0f8" stroke="#000" stroke-width="1.1"/><path d="M5 2H15L11 6H1Z" fill="#3a70c0"/><path d="M11 6V16M11 6L15 2" stroke="#000" fill="none"/></svg>
<svg class="abs" style="left:181px;top:612px" width="16" height="16" viewBox="0 0 16 16"><path d="M1 6L5 2H15V12L11 16H1Z" fill="#fff" stroke="#000" stroke-width="1.1"/><path d="M1 6H11V16M11 6L15 2" stroke="#000" fill="none"/><path d="M3 9L9 15M9 9L3 15" stroke="#d03030" stroke-width="1.6"/></svg>
<svg class="abs" style="left:204px;top:612px" width="16" height="16" viewBox="0 0 16 16"><circle cx="8" cy="8" r="6" fill="none" stroke="#3a70c0" stroke-width="2"/><rect x="4" y="8" width="6" height="8" fill="#fff" stroke="#000"/></svg>
<svg class="abs" style="left:227px;top:612px" width="16" height="16" viewBox="0 0 16 16"><path d="M2 8L6 4L10 16H4Z" fill="#fff" stroke="#000" stroke-width="1.1"/><path d="M10 1L14 5M13 1H10V4" stroke="#203050" stroke-width="1.3" fill="none"/></svg>
<svg class="abs" style="left:250px;top:612px" width="16" height="16" viewBox="0 0 16 16"><path d="M1 10L4 7H9V16H1Z" fill="#88b0d8" stroke="#203050"/><path d="M6 4L9 1H15V10L12 13H6Z" fill="#c8dcf0" stroke="#203050" stroke-width="0.8"/><path d="M3 6Q3 2 7 2" stroke="#203050" fill="none"/></svg>
<svg class="abs" style="left:273px;top:612px" width="16" height="16" viewBox="0 0 16 16"><path d="M1 4h3v3h-3zM1 9h3v3h-3zM1 14h3v2h-3z" fill="#000"/><path d="M6 6L9 3H15V13L12 16H6Z" fill="#40b050" stroke="#203050" stroke-width="0.8"/></svg>
<svg class="abs" style="left:301px;top:612px" width="16" height="16" viewBox="0 0 16 16"><path d="M1 10L4 7H9V16H1Z" fill="#88b0d8" stroke="#203050"/><path d="M6 4L9 1H15V10L12 13H6Z" fill="#c8dcf0" stroke="#203050" stroke-width="0.8"/><path d="M3 6Q3 2 7 2" stroke="#203050" fill="none"/></svg>
<svg class="abs" style="left:325px;top:612px" width="16" height="16" viewBox="0 0 16 16"><path d="M1 4h3v3h-3zM1 9h3v3h-3zM1 14h3v2h-3z" fill="#000"/><path d="M6 6L9 3H15V13L12 16H6Z" fill="#fff" stroke="#203050" stroke-width="0.8"/><path d="M15 3V13" stroke="#d03040" stroke-width="1.5"/></svg>
<svg class="abs" style="left:353px;top:612px" width="16" height="16" viewBox="0 0 16 16"><path d="M2 4L9 1V13L2 16Z" fill="#f0e8f0" stroke="#d0c0d0"/><path d="M9 6V14" stroke="#c03030" stroke-width="1.3"/><path d="M9 10H15M12 7V13" stroke="#000" stroke-width="1.2"/></svg>
<svg class="abs" style="left:377px;top:612px" width="16" height="16" viewBox="0 0 16 16"><path d="M1 6L5 2H13V14H1Z" fill="#c8d8e8" stroke="#8098b0"/><path d="M10 1L8 12" stroke="#806020" stroke-width="1.5"/><path d="M5 12L8 7L12 12L11 16H6Z" fill="#f0b020"/></svg>
<svg class="abs" style="left:401px;top:612px" width="16" height="16" viewBox="0 0 16 16"><rect x="2" y="4" width="5" height="12" rx="2" fill="#3a70c0" stroke="#203050"/><rect x="9" y="4" width="5" height="12" rx="2" fill="#3a70c0" stroke="#203050"/><path d="M8 0V16" stroke="#000" stroke-dasharray="2 1"/></svg>
<svg class="abs" style="left:424px;top:612px" width="16" height="16" viewBox="0 0 16 16"><path d="M1 5L5 1H15V12L11 16H1Z" fill="#5a7aa0" stroke="#203050"/><rect x="3" y="6" width="7" height="8" fill="#a8c0d8" stroke="#203050" stroke-width="0.8"/></svg>
<svg class="abs" style="left:447px;top:612px" width="16" height="16" viewBox="0 0 16 16"><path d="M3 5L7 1H15V9L11 13H3Z" fill="#a8c8e8" stroke="#203050" stroke-width="0.8"/><path d="M1 10L4 14L10 6" stroke="#30a030" stroke-width="2.2" fill="none"/></svg>
<div class="abs" style="left:107px;top:610px;width:1px;height:14px;background:#c8c4b0"></div>
<div class="abs" style="left:108px;top:610px;width:1px;height:14px;background:#fbfaf4"></div>
<div class="abs" style="left:296px;top:610px;width:1px;height:14px;background:#c8c4b0"></div>
<div class="abs" style="left:297px;top:610px;width:1px;height:14px;background:#fbfaf4"></div>
<div class="abs" style="left:348px;top:610px;width:1px;height:14px;background:#c8c4b0"></div>
<div class="abs" style="left:349px;top:610px;width:1px;height:14px;background:#fbfaf4"></div>
</body></html>
